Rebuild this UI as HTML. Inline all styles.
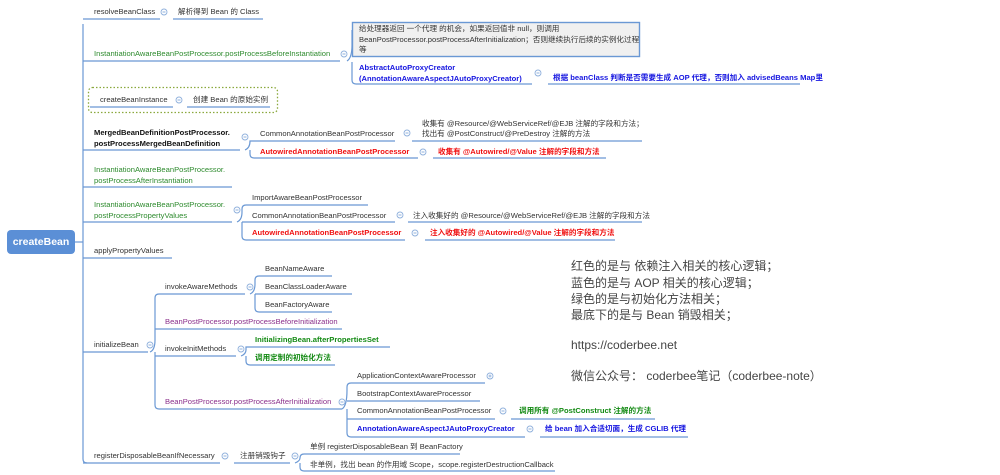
<!DOCTYPE html>
<html><head><meta charset="utf-8"><style>
body{margin:0;width:1000px;height:475px;background:#fff;position:relative;overflow:hidden;font-family:"Liberation Sans","Noto Sans CJK SC",sans-serif;}
.t{position:absolute;font-size:7.6px;line-height:10px;color:#333;white-space:nowrap;}
.g{color:#2e8b2e}.r{color:#f01010;font-weight:bold}.b{color:#1515e0;font-weight:bold}.p{color:#8b2f8b}.k{font-weight:bold;color:#111}.gb{color:#138a13;font-weight:bold}
.big{position:absolute;font-size:12px;line-height:16px;color:#444;white-space:nowrap;}
svg{position:absolute;left:0;top:0}
</style></head><body>
<svg width="1000" height="475" fill="none" stroke="#6a98d4" stroke-width="1.2">
<path d="M83 24 V459 Q83 463 87 463"/>
<path d="M75 242 H83"/>
<path d="M83 19 H160 M173 19 H263"/>
<path d="M83 61 H340"/>
<path d="M90 107 H173 M187 107 H270"/>
<path d="M83 150 H240"/>
<path d="M83 187 H232"/>
<path d="M83 222 H232"/>
<path d="M83 258 H172"/>
<path d="M83 352 H148"/>
<path d="M83 463 H220 M234 463 H290"/>
<path d="M347 61 Q352 58 352 45 V30 M352 62 V80 Q352 84 356 84 H532 M548 84 H800"/>
<path d="M245 150 Q250 148 250 141 H395 M412 141 H642 M250 150 V154 Q250 158 254 158 H418 M433 158 H606"/>
<path d="M237 222 Q242 220 242 212 V209 Q242 205 246 205 H368 M242 222 H395 M408 222 H642 M242 222 V236 Q242 240 246 240 H405 M425 240 H615"/>
<path d="M150 352 Q155 350 155 340 V298 Q155 294 159 294 H245 M155 329 H342 M155 356 H236 M155 352 V405 Q155 409 159 409 H342"/>
<path d="M250 294 Q255 292 255 284 V280 Q255 276 259 276 H332 M255 294 H352 M255 294 V308 Q255 312 259 312 H332"/>
<path d="M241 356 Q246 354 246 350 V347 H390 M246 356 V361 Q246 365 250 365 H335"/>
<path d="M342 409 Q347 406 347 390 V387 Q347 383 351 383 H485 M347 401 H480 M347 409 V419 H495 M511 419 H655 M347 419 V433 Q347 437 351 437 H525 M540 437 H688"/>
<path d="M295 463 Q300 461 300 458 Q300 454 304 454 H460 M300 463 V467 Q300 471 304 471 H555"/>
<g stroke="#8fb0dc" stroke-width="0.9" fill="#fff">
<circle cx="164" cy="12" r="3"/><circle cx="344" cy="54" r="3"/><circle cx="179" cy="100" r="3"/><circle cx="538" cy="73" r="3"/>
<circle cx="245" cy="137" r="3"/><circle cx="407" cy="133" r="3"/><circle cx="423" cy="152" r="3"/>
<circle cx="237" cy="210" r="3"/><circle cx="400" cy="215" r="3"/><circle cx="415" cy="233" r="3"/>
<circle cx="150" cy="345" r="3"/><circle cx="250" cy="287" r="3"/><circle cx="241" cy="349" r="3"/><circle cx="342" cy="402" r="3"/>
<circle cx="490" cy="376" r="3"/><circle cx="503" cy="411" r="3"/><circle cx="530" cy="429" r="3"/><circle cx="225" cy="456" r="3"/><circle cx="295" cy="456" r="3"/>
</g>
<g stroke="#8fb0dc" stroke-width="0.9">
<path d="M162.5 12h3M342.5 54h3M177.5 100h3M536.5 73h3M243.5 137h3M405.5 133h3M421.5 152h3M235.5 210h3M398.5 215h3M413.5 233h3M148.5 345h3M248.5 287h3M239.5 349h3M340.5 402h3M488.5 376h3M490 374.5v3M501.5 411h3M528.5 429h3M223.5 456h3M293.5 456h3"/>
</g>
<rect x="88.5" y="87.5" width="189" height="25" rx="4" stroke="#8aa83c" stroke-width="1.3" stroke-dasharray="1.5 2"/>
<rect x="352.5" y="22.5" width="287" height="34" fill="#f0f0f0" stroke="#6a98d4" stroke-width="1.4"/>
<rect x="7" y="230" width="68" height="24" rx="4" fill="#5b8fd6" stroke="none"/>
</svg>
<div class="t" style="left:7px;width:68px;text-align:center;top:236px;font-size:10.5px;line-height:12px;color:#fff;font-weight:bold">createBean</div>

<div class="t" style="left:94px;top:7px">resolveBeanClass</div>
<div class="t" style="left:178px;top:7px">解析得到 Bean 的 Class</div>
<div class="t g" style="left:94px;top:49px">InstantiationAwareBeanPostProcessor.postProcessBeforeInstantiation</div>
<div class="t" style="left:359px;top:24px;line-height:10.5px">给处理器返回 一个代理 的机会，如果返回值非 null，则调用<br>BeanPostProcessor.postProcessAfterInitialization；否则继续执行后续的实例化过程<br>等</div>
<div class="t b" style="left:359px;top:62px;line-height:11px">AbstractAutoProxyCreator<br>(AnnotationAwareAspectJAutoProxyCreator)</div>
<div class="t b" style="left:553px;top:73px">根据 beanClass 判断是否需要生成 AOP 代理，否则加入 advisedBeans Map里</div>
<div class="t" style="left:100px;top:95px">createBeanInstance</div>
<div class="t" style="left:193px;top:95px">创建 Bean 的原始实例</div>
<div class="t k" style="left:94px;top:127px;line-height:11px">MergedBeanDefinitionPostProcessor.<br>postProcessMergedBeanDefinition</div>
<div class="t" style="left:260px;top:129px">CommonAnnotationBeanPostProcessor</div>
<div class="t" style="left:422px;top:119px">收集有 @Resource/@WebServiceRef/@EJB 注解的字段和方法；<br>找出有 @PostConstruct/@PreDestroy 注解的方法</div>
<div class="t r" style="left:260px;top:147px">AutowiredAnnotationBeanPostProcessor</div>
<div class="t r" style="left:438px;top:147px">收集有 @Autowired/@Value 注解的字段和方法</div>
<div class="t g" style="left:94px;top:165px;line-height:10.5px">InstantiationAwareBeanPostProcessor.<br>postProcessAfterInstantiation</div>
<div class="t g" style="left:94px;top:200px;line-height:10.5px">InstantiationAwareBeanPostProcessor.<br>postProcessPropertyValues</div>
<div class="t" style="left:252px;top:193px">ImportAwareBeanPostProcessor</div>
<div class="t" style="left:252px;top:211px">CommonAnnotationBeanPostProcessor</div>
<div class="t" style="left:413px;top:211px">注入收集好的 @Resource/@WebServiceRef/@EJB 注解的字段和方法</div>
<div class="t r" style="left:252px;top:228px">AutowiredAnnotationBeanPostProcessor</div>
<div class="t r" style="left:430px;top:228px">注入收集好的 @Autowired/@Value 注解的字段和方法</div>
<div class="t" style="left:94px;top:246px">applyPropertyValues</div>
<div class="t" style="left:94px;top:340px">initializeBean</div>
<div class="t" style="left:165px;top:282px">invokeAwareMethods</div>
<div class="t" style="left:265px;top:264px">BeanNameAware</div>
<div class="t" style="left:265px;top:282px">BeanClassLoaderAware</div>
<div class="t" style="left:265px;top:300px">BeanFactoryAware</div>
<div class="t p" style="left:165px;top:317px">BeanPostProcessor.postProcessBeforeInitialization</div>
<div class="t" style="left:165px;top:344px">invokeInitMethods</div>
<div class="t gb" style="left:255px;top:335px">InitializingBean.afterPropertiesSet</div>
<div class="t gb" style="left:255px;top:353px">调用定制的初始化方法</div>
<div class="t p" style="left:165px;top:397px">BeanPostProcessor.postProcessAfterInitialization</div>
<div class="t" style="left:357px;top:371px">ApplicationContextAwareProcessor</div>
<div class="t" style="left:357px;top:389px">BootstrapContextAwareProcessor</div>
<div class="t" style="left:357px;top:406px">CommonAnnotationBeanPostProcessor</div>
<div class="t gb" style="left:519px;top:406px">调用所有 @PostConstruct 注解的方法</div>
<div class="t b" style="left:357px;top:424px">AnnotationAwareAspectJAutoProxyCreator</div>
<div class="t b" style="left:545px;top:424px">给 bean 加入合适切面，生成 CGLIB 代理</div>
<div class="t" style="left:94px;top:451px">registerDisposableBeanIfNecessary</div>
<div class="t" style="left:240px;top:451px">注册销毁钩子</div>
<div class="t" style="left:310px;top:442px">单例 registerDisposableBean 到 BeanFactory</div>
<div class="t" style="left:310px;top:460px">非单例，找出 bean 的作用域 Scope，scope.registerDestructionCallback</div>

<div class="big" style="left:571px;top:258px">红色的是与 依赖注入相关的核心逻辑；</div>
<div class="big" style="left:571px;top:275px">蓝色的是与 AOP 相关的核心逻辑；</div>
<div class="big" style="left:571px;top:291px">绿色的是与初始化方法相关；</div>
<div class="big" style="left:571px;top:307px">最底下的是与 Bean 销毁相关；</div>
<div class="big" style="left:571px;top:337px">https://coderbee.net</div>
<div class="big" style="left:571px;top:368px">微信公众号： coderbee笔记（coderbee-note）</div>
</body></html>
